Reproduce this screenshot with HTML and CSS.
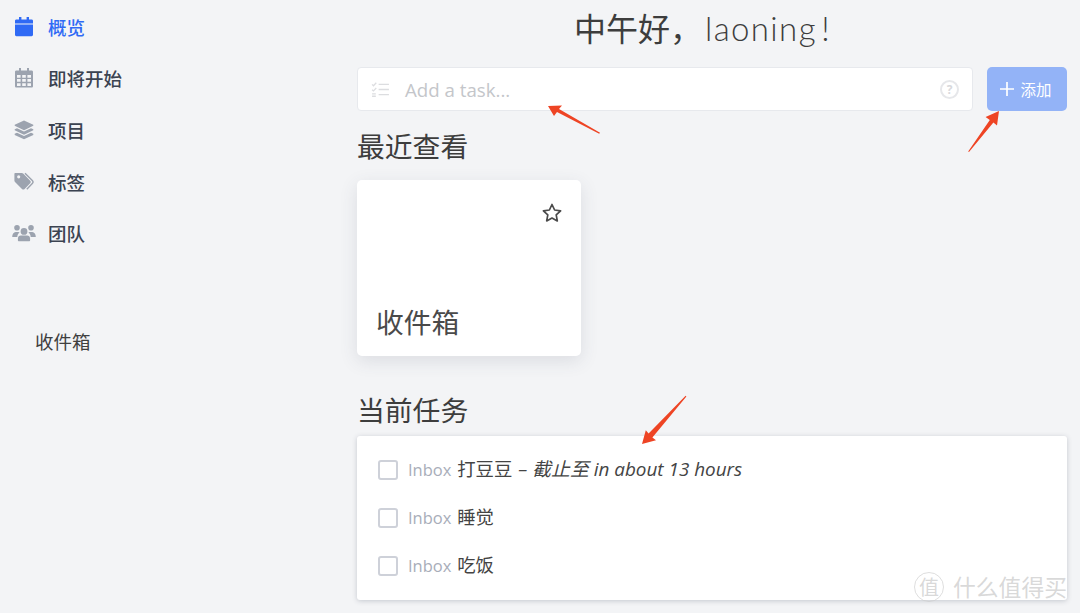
FILE: index.html
```html
<!DOCTYPE html>
<html lang="zh">
<head>
<meta charset="utf-8">
<title>概览</title>
<link rel="stylesheet" href="styles.css">
</head>
<body>
<div class="page">
  <aside class="sidebar">
    <nav class="nav">
      <a class="nav-item active">
        <svg class="nav-icon" viewBox="0 0 20 20"><path fill="currentColor" d="M5 0h2.400v2.400h5.200V0H15v2.400h2.600c.8 0 1.400.6 1.400 1.400v2.700H1V3.800c0-.8.6-1.400 1.400-1.400H5zM1 7.600h18v10.200c0 .8-.6 1.400-1.400 1.400H2.400c-.8 0-1.400-.6-1.400-1.400z"/></svg>
        <span>概览</span>
      </a>
      <a class="nav-item">
        <svg class="nav-icon" viewBox="0 0 20 20"><path fill="currentColor" fill-rule="evenodd" d="M5 0h2v2.400h6V0h2v2.400h2.600c.8 0 1.400.6 1.400 1.400v14.400c0 .8-.6 1.400-1.400 1.400H2.400c-.8 0-1.400-.6-1.400-1.400V3.800c0-.8.6-1.400 1.400-1.400H5zM3 7v2.700h3.600V7zm5.200 0v2.700h3.600V7zm5.200 0v2.700H17V7zM3 11.100v2.700h3.600v-2.700zm5.200 0v2.700h3.600v-2.700zm5.200 0v2.700H17v-2.700zM3 15.200V18h3.600v-2.800zm5.200 0V18h3.600v-2.800zm5.200 0V18H17v-2.800z"/></svg>
        <span>即将开始</span>
      </a>
      <a class="nav-item">
        <svg class="nav-icon" viewBox="0 0 20 20"><path fill="currentColor" d="M10 .5l9.300 4.300v1L10 10.200.7 5.800v-1zM3 8.200l7 3.300 7-3.300 2.300 1.100v1L10 14.700.7 10.300v-1zm0 4.600l7 3.200 7-3.200 2.300 1v1.100L10 19.200.7 14.900v-1.100z"/></svg>
        <span>项目</span>
      </a>
      <a class="nav-item">
        <svg class="nav-icon" viewBox="0 0 20 20"><path fill="currentColor" fill-rule="evenodd" d="M1.500 1h6.300c.5 0 1 .2 1.400.6l7 7.100c.7.700.7 1.900 0 2.600l-5.600 5.700c-.7.700-1.900.7-2.600 0l-7-7.100c-.4-.4-.6-.9-.6-1.400V1.900c0-.5.400-.9 1.100-.9zM4.700 3.200a1.600 1.600 0 1 0 0 3.200 1.600 1.600 0 0 0 0-3.200z"/><path fill="none" stroke="currentColor" stroke-width="1.400" d="M11 1.200l7.300 7.400c.9.900.9 2 0 2.900l-5.500 5.700"/></svg>
        <span>标签</span>
      </a>
      <a class="nav-item">
        <svg class="nav-icon nav-icon-wide" viewBox="0 0 24 20"><path fill="currentColor" d="M5 2a2.800 2.800 0 1 1 0 5.600A2.800 2.800 0 0 1 5 2zm14 0a2.800 2.800 0 1 1 0 5.600A2.800 2.800 0 0 1 19 2zM12 5a3.400 3.400 0 1 1 0 6.800A3.400 3.400 0 0 1 12 5zM.2 14c0-2.700 1.400-5 3.500-5h2.600c.5 0 1 .2 1.300.5-1.300.8-2.200 2.500-2.300 4.500zm23.600 0h-5.100c-.1-2-1-3.700-2.300-4.500.3-.3.8-.5 1.300-.5h2.600c2.100 0 3.500 2.300 3.500 5zM8.800 12.600h6.400c1.600 0 2.900 1.300 2.900 2.900V17.200c0 .6-.5 1-1 1H6.900c-.5 0-1-.4-1-1v-1.700c0-1.600 1.300-2.900 2.900-2.900z"/></svg>
        <span>团队</span>
      </a>
    </nav>
    <div class="side-project">收件箱</div>
  </aside>

  <main class="main">
    <h1 class="greeting">中午好，<span class="greeting-name">laoning !</span></h1>

    <form class="task-form">
      <div class="task-input">
        <svg class="task-icon" viewBox="0 0 20 16"><path fill="none" stroke="currentColor" stroke-width="1.500" d="M8 2.500h11M8 8h11M8 13.500h11"/><path fill="none" stroke="currentColor" stroke-width="1.300" d="M1 2.500l1.500 1.500L5.500.8M1 8.200l1.500 1.400L5.500 6.400"/><path fill="currentColor" d="M1 12h4v1.400H1zM1 14.500h4V16H1z"/></svg>
        <span class="task-placeholder">Add a task...</span>
        <span class="task-help">?</span>
      </div>
      <button class="add-btn" type="button">
        <svg class="add-plus" viewBox="0 0 14 14"><path fill="none" stroke="currentColor" stroke-width="1.700" d="M7 0v14M0 7h14"/></svg>
        <span>添加</span>
      </button>
    </form>

    <h2 class="section-title section-recent">最近查看</h2>
    <article class="project-card">
      <svg class="star" viewBox="0 0 20 20"><path fill="none" stroke="currentColor" stroke-width="1.700" stroke-linejoin="round" d="M10 1.500l2.600 5.500 6 .8-4.400 4.100 1.100 6L10 15l-5.300 2.900 1.100-6L1.400 7.800l6-.8z"/></svg>
      <div class="project-name">收件箱</div>
    </article>

    <h2 class="section-title section-current">当前任务</h2>
    <section class="task-list">
      <div class="task-row">
        <span class="check"></span>
        <span class="task-text"><span class="inbox">Inbox</span> 打豆豆 <em class="due">– 截止至 in about 13 hours</em></span>
      </div>
      <div class="task-row">
        <span class="check"></span>
        <span class="task-text"><span class="inbox">Inbox</span> 睡觉</span>
      </div>
      <div class="task-row">
        <span class="check"></span>
        <span class="task-text"><span class="inbox">Inbox</span> 吃饭</span>
      </div>
    </section>
  </main>
</div>

<svg class="annot" viewBox="0 0 1080 613" aria-hidden="true">
  <path fill="#ee4424" d="M548 106l14-.5-3 3.600 41 23.600-.8 1-42.200-21.700-3 4z"/>
  <path fill="#ee4424" d="M999 111l-2 14.500-3.600-3-24.400 29.500-.8-.6 21.600-31.400-4.200-3z"/>
  <path fill="#ee4424" d="M642 444l14-3.800-3.600-2.800 34-41-.8-.6-37 37.600-2.800-3.200z"/>
</svg>
<div class="watermark"><span class="wm-badge">值</span><span class="wm-text">什么值得买</span></div>
</body>
</html>
```
FILE: styles.css
```css
* { box-sizing: border-box; }
html, body { margin: 0; height: 100%; overflow: hidden; }
body {
  background: #f3f4f6;
  color: #3f3f3f;
  font-family: "Open Sans", "Noto Sans CJK SC", sans-serif;
  position: relative;
}
.page { display: flex; width: 1080px; height: 613px; }

.sidebar { width: 357px; flex: none; padding-top: 1px; }
.nav { display: flex; flex-direction: column; }
.nav-item {
  display: flex;
  align-items: center;
  height: 51.6px;
  padding-left: 14px;
  color: #3b4351;
  font: 500 18.500px "Noto Sans CJK SC", sans-serif;
}
.nav-item.active { color: #2f6af5; }
.nav-icon { width: 20px; height: 20px; flex: none; margin-right: 14px; color: #9ca3af; }
.nav-item.active .nav-icon { color: #2f6af5; }
.nav-icon-wide { width: 24px; margin-left: -2px; margin-right: 12px; }
.side-project {
  margin: 69px 0 0 35px;
  font: 400 18.500px/26px "Noto Sans CJK SC", sans-serif;
  color: #3f3f3f;
}

.main { width: 710px; flex: none; }
.greeting {
  margin: 7px 0 0;
  height: 40px;
  text-align: center;
  font: 400 32px/40px "Noto Sans CJK SC", sans-serif;
  color: #3d3d3d;
  padding-right: 19px;
}
.greeting-name { font-family: Lato, sans-serif; font-weight: 300; font-size: 33px; letter-spacing: 1.400px; word-spacing: -6px; margin-left: 3px; }

.task-form { display: flex; gap: 14px; margin-top: 20px; }
.task-input {
  flex: 1;
  height: 44px;
  display: flex;
  align-items: center;
  background: #fff;
  border: 1px solid #e7e9ed;
  border-radius: 4px;
  padding: 0 13px;
}
.task-icon { width: 19px; height: 15px; color: #dcdde0; flex: none; }
.task-placeholder { margin-left: 15px; flex: 1; font-size: 18.700px; color: #c4c6ca; padding-top: 1px; }
.task-help {
  width: 19px;
  height: 19px;
  border: 2px solid #e6e7ea;
  border-radius: 50%;
  color: #d8d9dc;
  font: 700 12px/15px "Open Sans", sans-serif;
  text-align: center;
}
.add-btn {
  width: 80px;
  height: 44px;
  border: 0;
  border-radius: 5px;
  background: #93b3f7;
  color: #fff;
  font: 400 15.500px "Noto Sans CJK SC", sans-serif;
  display: flex;
  align-items: center;
  justify-content: center;
  gap: 6px;
  padding: 0 2px 0 0;
}
.add-plus { width: 14px; height: 14px; flex: none; }

.section-title {
  margin: 0;
  font: 400 27.800px/40px "Noto Sans CJK SC", sans-serif;
  color: #3d3d3d;
}
.section-recent { margin-top: 14px; }
.section-current { margin-top: 33px; }

.project-card {
  position: relative;
  width: 224px;
  height: 176px;
  margin-top: 15px;
  background: #fff;
  border-radius: 5px;
  box-shadow: 0 5px 18px rgba(60, 70, 90, .13);
  display: flex;
  align-items: flex-end;
  padding: 0 0 15px 19px;
}
.star { position: absolute; top: 23px; right: 19px; width: 20px; height: 20px; color: #4a4a4a; }
.project-name { font: 400 27.800px/40px "Noto Sans CJK SC", sans-serif; color: #4a4a4a; }

.task-list {
  margin-top: 7px;
  height: 164px;
  background: #fff;
  border-radius: 3px;
  box-shadow: 0 1px 5px rgba(60, 70, 90, .25);
  padding-top: 10px;
}
.task-row { display: flex; align-items: center; height: 48px; padding-left: 21px; }
.check {
  width: 20px;
  height: 20px;
  flex: none;
  border: 2px solid #ced1d9;
  border-radius: 3px;
  margin-right: 10px;
}
.task-text { font-size: 18.400px; color: #444; line-height: 24px; margin-top: -1px; }
.inbox { color: #a8adb9; font-size: 16.500px; margin-right: 1px; }
.due { font-style: italic; font-size: 18.900px; margin-left: 1px; }

.annot { position: absolute; inset: 0; width: 1080px; height: 613px; pointer-events: none; }
.watermark {
  position: absolute;
  left: 914px;
  top: 571px;
  display: flex;
  align-items: center;
  gap: 9px;
  color: rgba(200, 200, 200, .7);
  font: 400 22.800px/32px "Noto Sans CJK SC", sans-serif;
  text-shadow: 0 0 1px #fff;
}
.wm-badge {
  width: 30px;
  height: 30px;
  border: 1px solid rgba(205, 205, 205, .65);
  border-radius: 50%;
  font-size: 20px;
  line-height: 27px;
  text-align: center;
}
.wm-text { white-space: nowrap; }
```
